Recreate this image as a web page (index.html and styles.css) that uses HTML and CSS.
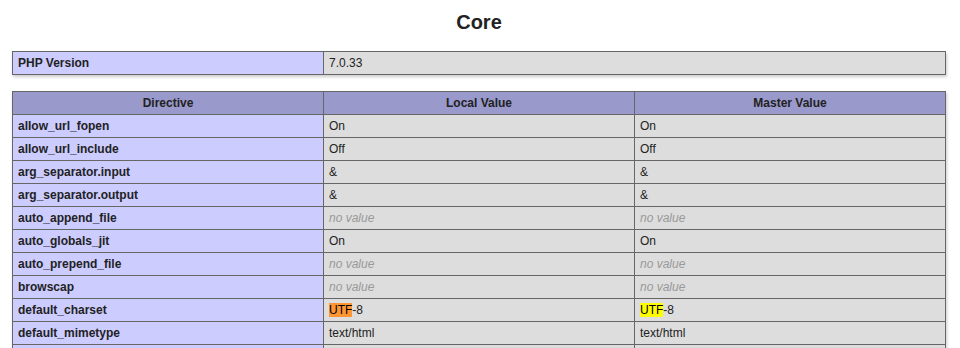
FILE: index.html
```html
<!DOCTYPE html>
<html>
<head>
<meta charset="utf-8">
<title>phpinfo()</title>
<link rel="stylesheet" href="styles.css">
</head>
<body>
<div class="center">
<h2>Core</h2>
<table>
<tr><td class="e">PHP Version </td><td class="v">7.0.33 </td></tr>
</table>
<table class="cols">
<tr class="h"><th>Directive</th><th>Local Value</th><th>Master Value</th></tr>
<tr><td class="e">allow_url_fopen</td><td class="v">On</td><td class="v">On</td></tr>
<tr><td class="e">allow_url_include</td><td class="v">Off</td><td class="v">Off</td></tr>
<tr><td class="e">arg_separator.input</td><td class="v">&amp;</td><td class="v">&amp;</td></tr>
<tr><td class="e">arg_separator.output</td><td class="v">&amp;</td><td class="v">&amp;</td></tr>
<tr><td class="e">auto_append_file</td><td class="v"><i>no value</i></td><td class="v"><i>no value</i></td></tr>
<tr><td class="e">auto_globals_jit</td><td class="v">On</td><td class="v">On</td></tr>
<tr><td class="e">auto_prepend_file</td><td class="v"><i>no value</i></td><td class="v"><i>no value</i></td></tr>
<tr><td class="e">browscap</td><td class="v"><i>no value</i></td><td class="v"><i>no value</i></td></tr>
<tr><td class="e">default_charset</td><td class="v"><span class="hl-active">UTF</span>-8</td><td class="v"><span class="hl">UTF</span>-8</td></tr>
<tr><td class="e">default_mimetype</td><td class="v">text/html</td><td class="v">text/html</td></tr>
<tr><td class="e">&nbsp;</td><td class="v">&nbsp;</td><td class="v">&nbsp;</td></tr>
</table>
</div>
</body>
</html>
```
FILE: styles.css
```css
html, body {
  margin: 0;
  padding: 0;
  background-color: #fff;
  color: #222;
  font-family: "Liberation Sans", Arial, sans-serif;
}
.center {
  text-align: center;
  padding: 11px 8px 0 6px;
}
h2 {
  font-size: 20px;
  line-height: 23px;
  margin: 0 0 17px;
  font-weight: bold;
}
table {
  border-collapse: collapse;
  border: 0;
  width: 934px;
  margin: 0 auto 16px;
  text-align: left;
  box-shadow: 1px 2px 3px #ccc;
}
td, th {
  border: 1px solid #666;
  font-size: 12px;
  line-height: 14px;
  vertical-align: baseline;
  padding: 4px 5px;
}
th {
  text-align: center;
}
.e {
  background-color: #ccf;
  width: 300px;
  font-weight: bold;
}
.h {
  background-color: #99c;
  font-weight: bold;
}
.v {
  background-color: #ddd;
  word-wrap: break-word;
}
.cols th,
.cols td {
  width: 300px;
}
.v i {
  color: #999;
}
.hl-active {
  background-color: #ff9632;
  color: #000;
}
.hl {
  background-color: #ffff00;
  color: #000;
}
```
